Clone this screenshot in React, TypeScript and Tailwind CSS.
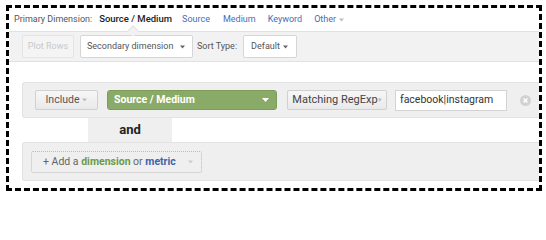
function Caret({ className = '' }: { className?: string }) {
  return (
    <svg width="7" height="4" viewBox="0 0 7 4" className={className}>
      <path d="M0 0h7L3.5 4z" fill="currentColor" />
    </svg>
  );
}

function ClearIcon() {
  return (
    <svg width="11" height="11" viewBox="0 0 11 11">
      <circle cx="5.5" cy="5.5" r="5.5" fill="#d2d2d2" />
      <path d="M3.6 3.6l3.8 3.8M7.4 3.6l-3.8 3.8" stroke="#fff" strokeWidth="1.4" />
    </svg>
  );
}

export default function App() {
  return (
    <div className="w-[546px] h-[200px] bg-white pt-[5px] pl-[6px] font-['Roboto',sans-serif] whitespace-nowrap">
      <div className="w-[536px] h-[186px] border-[3px] border-dashed border-black flex flex-col overflow-hidden">
        {/* Primary dimension row */}
        <div className="h-[23px] flex items-center pl-[5px] text-[9px] text-[#555] shrink-0">
          <span>Primary Dimension:</span>
          <span className="ml-[7px] font-medium text-[#222] text-[9.5px]">Source / Medium</span>
          <span className="ml-[10px] text-[#4a6cb3]">Source</span>
          <span className="ml-[13px] text-[#4a6cb3]">Medium</span>
          <span className="ml-[12px] text-[#4a6cb3]">Keyword</span>
          <span className="ml-[12px] text-[#4a6cb3] flex items-center gap-[3px]">
            Other <Caret className="text-[#bbc] w-[5px]" />
          </span>
        </div>

        {/* Toolbar */}
        <div className="relative h-[31px] shrink-0 bg-[#f2f2f2] border-y border-[#e1e1e1] flex items-center pl-[13px] text-[9px]">
          <div className="absolute -top-[5px] left-[120px] w-[8px] h-[8px] rotate-45 bg-[#f2f2f2] border-l border-t border-[#e1e1e1]" />
          <div className="h-[23px] w-[52px] flex items-center justify-center border border-[#e4e4e4] rounded-[2px] text-[#c8c8c8] bg-[#f4f4f4]">
            Plot Rows
          </div>
          <div className="ml-[6px] h-[23px] w-[113px] flex items-center justify-between pl-[6px] pr-[7px] border border-[#d6d6d6] rounded-[2px] bg-white text-[#555]">
            <span>Secondary dimension</span>
            <Caret className="text-[#666] w-[5px]" />
          </div>
          <span className="ml-[4px] text-[#555]">Sort Type:</span>
          <div className="ml-[6px] h-[23px] w-[54px] flex items-center justify-between pl-[7px] pr-[8px] border border-[#d6d6d6] rounded-[2px] bg-white text-[#555]">
            <span>Default</span>
            <Caret className="text-[#666] w-[5px]" />
          </div>
        </div>

        {/* Filter panel */}
        <div className="mt-[20px] ml-[13px] h-[36px] shrink-0 bg-[#efefef] border border-r-0 border-[#e3e3e3] rounded-l-[3px] flex items-center pl-[12px] text-[10.5px]">
          <div className="h-[20px] w-[63px] flex items-center justify-center gap-[3px] border border-[#d0d0d0] rounded-[2px] bg-gradient-to-b from-[#f7f7f7] to-[#e9e9e9] text-[#555]">
            Include <Caret className="text-[#bbb] w-[5px]" />
          </div>
          <div className="ml-[9px] h-[20px] w-[170px] flex items-center justify-between pl-[6px] pr-[7px] rounded-[3px] border border-[#7d9c5c] bg-[#8aab68] text-white font-bold">
            <span>Source / Medium</span>
            <Caret className="text-white" />
          </div>
          <div className="ml-[10px] h-[20px] w-[100px] flex items-center justify-center border border-[#d0d0d0] rounded-[2px] bg-gradient-to-b from-[#f7f7f7] to-[#e9e9e9] text-[#444] text-[11px]">
            Matching RegExp<span className="text-[#bbb] text-[7px]">▾</span>
          </div>
          <div className="ml-[8px] h-[21px] w-[112px] flex items-center px-[4px] border border-[#d3d3d3] bg-white text-[#333]">
            facebook|instagram
          </div>
          <div className="ml-[13px]">
            <ClearIcon />
          </div>
        </div>

        {/* "and" connector */}
        <div className="h-[24px] shrink-0 flex">
          <div className="ml-[79px] w-[84px] bg-[#efefef] flex items-center justify-center text-[13px] font-bold text-[#222]">
            and
          </div>
        </div>

        {/* Add dimension panel */}
        <div className="ml-[13px] h-[39px] shrink-0 bg-[#efefef] border border-r-0 border-[#e3e3e3] rounded-l-[3px] pl-[8px] pt-[8px]">
          <div className="h-[22px] w-[171px] flex items-center justify-between pl-[11px] pr-[8px] border border-dotted border-[#bdbdbd] rounded-[2px] text-[10.5px] text-[#666]">
            <span>
              + Add a <span className="font-bold text-[#6e9a47]">dimension</span> or{' '}
              <span className="font-bold text-[#3e63b0]">metric</span>
            </span>
            <Caret className="text-[#ccc] w-[5px]" />
          </div>
        </div>
      </div>
    </div>
  );
}
